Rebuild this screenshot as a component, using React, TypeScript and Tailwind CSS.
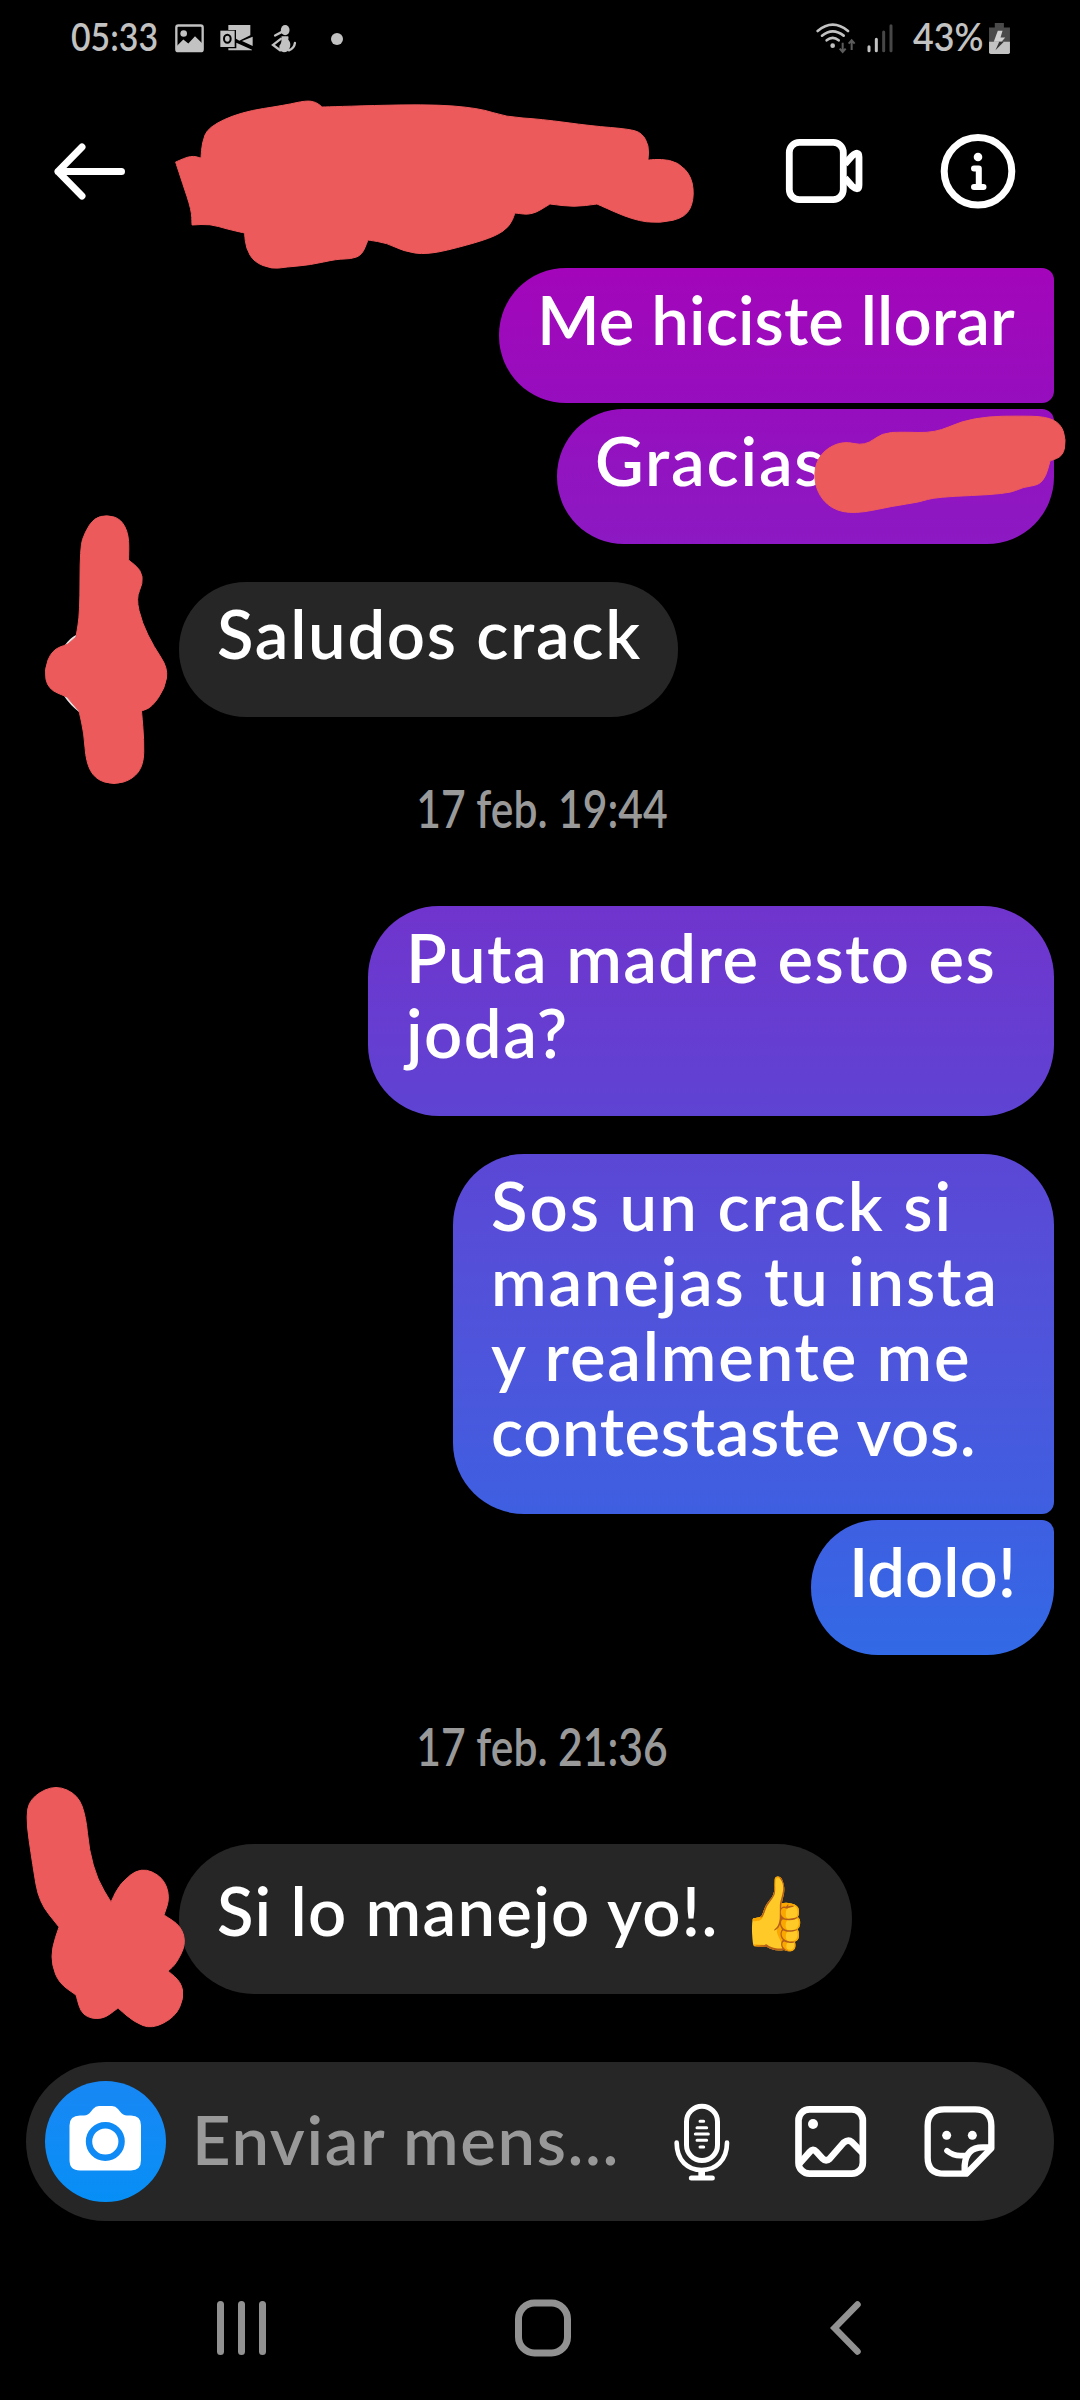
import { clsx } from "clsx";

interface Line {
  text: string;
  tracking: string;
}

interface BubbleProps {
  lines: Line[];
  className: string;
  emoji?: string;
}

type Point = [number, number];

// a point given twice makes a sharp corner
const SCRIBBLES: Point[][] = [
  [
    [175.6, 162], [175.6, 162], [191, 155.5], [201, 158], [201, 158], [202, 143], [208, 127], [241, 112],
    [286, 105], [306, 100.5], [316, 102], [322, 107], [322, 107], [427, 104], [479, 108], [506, 117],
    [540, 119], [592, 126], [629, 129], [642, 133], [649, 146], [648, 160], [648, 160], [661, 159],
    [678, 162], [692, 177], [694, 200], [686, 217], [660, 223.5], [633, 220], [597, 204], [597, 204],
    [574, 207], [550, 204], [550, 204], [532, 215], [515, 213], [515, 213], [510, 226], [496, 236],
    [468, 245], [427, 255], [403, 251], [387, 243], [368, 240], [368, 240], [362, 255], [351, 259],
    [337, 259], [310, 265], [286, 267], [272, 269], [254, 262], [246, 248], [244.5, 233], [244.5, 233],
    [227, 229], [210, 224], [192, 225], [192, 225], [191.5, 210], [182.5, 183],
  ],
  [
    [814, 467], [824, 450], [843, 441], [865, 446], [882, 433], [901, 432], [935, 433], [962, 421],
    [989, 416.5], [1016, 416], [1046, 416.5], [1061, 424], [1066, 440], [1063, 456], [1050, 461],
    [1050, 461], [1046, 476], [1039, 485], [1023, 487], [1008, 494], [935, 497], [920, 502], [893, 506],
    [855, 514], [831, 509], [816, 491],
  ],
  [
    [85, 532], [94, 518], [107, 515], [121, 519], [129, 535], [128.6, 560], [128.6, 560], [141, 570],
    [143, 583], [136, 598], [142, 623], [154, 647], [168, 668], [165, 688], [152, 707], [141.5, 711],
    [141.5, 711], [144, 740], [143.5, 765], [133, 779], [114, 785], [95, 779], [86, 762], [84, 733],
    [79, 711], [79, 711], [67, 697], [67, 697], [48, 689], [44, 670], [52, 650], [68, 644], [68, 644],
    [76, 637], [76, 637], [80, 613], [80, 547],
  ],
  [
    [25, 1812], [34, 1795], [56, 1785], [78, 1795], [86, 1817], [89, 1850], [97.6, 1880], [111, 1902],
    [111, 1902], [120, 1883], [141, 1867], [163, 1877], [170, 1897], [164, 1915], [164, 1915], [181, 1926],
    [186, 1944], [176, 1964], [168, 1971], [168, 1971], [181, 1982], [184, 1998], [175, 2017], [152, 2029],
    [134, 2022], [118, 2008], [118, 2008], [102, 2020], [82, 2016], [76, 1995], [76, 1995], [59, 1983],
    [52, 1965], [52, 1948], [59, 1927], [59, 1927], [39, 1902], [33, 1867],
  ],
];

// closed curve that passes through the middle of every edge
function smoothPath(points: Point[]) {
  const mid = (a: Point, b: Point) => `${(a[0] + b[0]) / 2} ${(a[1] + b[1]) / 2}`;
  const last = points[points.length - 1];
  const curves = points.map((p, i) => `Q${p[0]} ${p[1]} ${mid(p, points[(i + 1) % points.length])}`);
  return `M${mid(last, points[0])} ${curves.join(" ")}Z`;
}

function Scribbles() {
  return (
    <svg className="pointer-events-none absolute inset-0" width="1080" height="2400" viewBox="0 0 1080 2400">
      <path d="M76 635Q70 638 65 645L76 648ZM64 696Q70 705 79 712L84 700Z" fill="#e2e2e2" />
      {SCRIBBLES.map((points, i) => (
        <path key={i} d={smoothPath(points)} fill="#ed5a5b" stroke="#ed5a5b" strokeWidth="1" strokeLinejoin="round" />
      ))}
    </svg>
  );
}

function StatusBar() {
  return (
    <div className="flex h-[73px] items-center pr-[70px] pl-[71px] text-[38px] font-semibold text-[#c2c2c2]">
      <span className="w-[104px] shrink-0">
        <span className="inline-block origin-left scale-x-[0.89]">05:33</span>
      </span>
      <svg className="mt-[3px]" width="29" height="29" viewBox="45 26 87 86">
        <rect x="49" y="30" width="79" height="77" rx="6" fill="none" stroke="#c2c2c2" strokeWidth="7" />
        <circle cx="71" cy="54" r="10" fill="#c2c2c2" />
        <path d="M49 93L70 72L85 84L105 62L128 85V107H49Z" fill="#c2c2c2" />
      </svg>
      <svg className="mt-[3px] ml-4" width="33" height="28" viewBox="180 26 99 84">
        <path d="M205 29H271V60L238 76L228 70V44H205Z" fill="#c2c2c2" />
        <path d="M181 46H224V95H181Z" fill="#c2c2c2" />
        <ellipse cx="202" cy="70" rx="10" ry="12" fill="none" stroke="#000" strokeWidth="6" />
        <path d="M278 64V92L246 77ZM205 99H229V82L276 103V105H205Z" fill="#c2c2c2" />
      </svg>
      <svg className="mt-[3px] ml-[18px]" width="26" height="29" viewBox="333 26 77 86">
        <ellipse cx="375" cy="44" rx="13" ry="15" fill="#c2c2c2" />
        <path d="M386 104Q402 98 404 82" fill="none" stroke="#c2c2c2" strokeWidth="7" strokeLinecap="round" />
        <path d="M364 62H384Q386 66 384 72Q394 84 388 98Q384 110 371 110Q355 108 358 90Q366 82 364 62Z" fill="#c2c2c2" />
        <path d="M362 70L339 88L360 104M345 60L364 50" fill="none" stroke="#c2c2c2" strokeWidth="7" strokeLinecap="round" />
      </svg>
      <span className="mt-1 ml-[34px] size-3 rounded-full bg-[#c2c2c2]" />
      <svg className="mt-[3px] ml-auto" width="40" height="32" viewBox="50 22 120 96">
        <g fill="none" stroke="#c2c2c2" strokeWidth="8" strokeLinecap="round">
          <path d="M55 49Q100 11 146 49" />
          <path d="M68 63Q100 37 133 63" />
          <path d="M82 77Q100 62 118 77" />
        </g>
        <circle cx="100" cy="93" r="7" fill="#c2c2c2" />
        <path d="M130 84V111M121 102L130 112L139 102M157 106V78M148 87L157 77L166 87" fill="none" stroke="#5c5c5c" strokeWidth="6" />
      </svg>
      <svg className="mt-[3px] ml-[11px]" width="26" height="30" viewBox="201 28 78 90">
        <g fill="none" strokeWidth="9" strokeLinecap="round">
          <path d="M207 99V111M229 77V111" stroke="#c2c2c2" />
          <path d="M251 55V111M273 36V111" stroke="#474747" />
        </g>
      </svg>
      <span className="ml-5 w-[76px]">
        <span className="inline-block origin-left scale-x-[0.94]">43%</span>
      </span>
      <svg className="mt-[3px]" width="21" height="31" viewBox="569 25 62 92">
        <path d="M586 25H613V38H631V82H569V38H586Z" fill="#4a4a4a" />
        <path d="M569 81H631V112Q631 117 626 117H574Q569 117 569 112Z" fill="#c2c2c2" />
        <path d="M595 48H609L603 68H617L606 81H583Z" fill="#d0d0d0" />
        <path d="M599 81H613L588 106L596 88Z" fill="#333" />
      </svg>
    </div>
  );
}

function Header() {
  return (
    <header className="flex h-[195px] items-center pt-[1px] pr-16 pl-[52px]">
      <svg width="76" height="60" viewBox="0 0 76 60" fill="none" stroke="#fff" strokeWidth="7" strokeLinecap="round" strokeLinejoin="round">
        <path d="M69.500 30.500H6M30 6L6 30.500L30 55" />
      </svg>
      <svg className="ml-auto" width="78" height="70" viewBox="785 137 78 70" fill="none" stroke="#fff" strokeWidth="6.800">
        <rect x="789.300" y="143.400" width="54" height="57.200" rx="10" />
        <path d="M845 165L852 157Q859 151 859 158V186Q859 193 852 187L845 179" strokeLinejoin="round" />
      </svg>
      <svg className="ml-[77px]" width="76" height="76" viewBox="939 134 76 76" fill="none" stroke="#fff">
        <circle cx="977" cy="172.300" r="33.800" strokeWidth="7" />
        <circle cx="977" cy="158" r="4.300" fill="#fff" stroke="none" />
        <path d="M973 169.500H977.800V188M973 188H982.500" strokeWidth="6" strokeLinecap="round" strokeLinejoin="round" />
      </svg>
    </header>
  );
}

function Bubble({ lines, className, emoji }: BubbleProps) {
  return (
    <div className={clsx("shrink-0 pl-[38px] text-[67px] leading-[75px] font-semibold whitespace-nowrap", className)}>
      {lines.map((line) => (
        <p key={line.text} className={line.tracking}>
          {line.text}
        </p>
      ))}
      {emoji && <span className="ml-6 inline-block origin-left scale-x-[0.72] text-[72px]">{emoji}</span>}
    </div>
  );
}

function Timestamp({ children }: { children: string }) {
  return (
    <div className="flex h-[189px] shrink-0 items-center justify-center pb-[4px] pl-[3px] text-[51px] font-semibold text-[#999]">
      <span className="w-[310px] origin-center scale-x-[0.835] text-center whitespace-nowrap">{children}</span>
    </div>
  );
}

function Composer() {
  return (
    <div className="mx-[26px] mt-[68px] flex h-[159px] shrink-0 items-center rounded-full bg-[#262626] pl-[19px]">
      <div className="size-[121px] shrink-0 rounded-full bg-linear-to-b from-[#1787f4] to-[#068ff6]">
        <svg width="121" height="121" viewBox="0 0 121 121">
          <path
            d="M35 34.500H39Q43 34.500 46 30.500L48 28Q50.500 25 54 25H67Q70.500 25 73 28L75 30.500Q78 34.500 82 34.500H86Q96 34.500 96 44.500V79Q96 89.500 86 89.500H35Q24.500 89.500 24.500 79V44.500Q24.500 34.500 35 34.500Z"
            fill="#fff"
          />
          <circle cx="60.300" cy="60.500" r="16.300" fill="none" stroke="#108bf5" strokeWidth="6.400" />
        </svg>
      </div>
      <span className="ml-[26px] pb-[5px] text-[67px] leading-[75px] font-semibold tracking-[1.6px] whitespace-nowrap text-[#999]">
        Enviar mens...
      </span>
      <div className="mr-[58px] ml-auto flex shrink-0 items-center">
        <svg width="58" height="80" viewBox="155 184 174 240" fill="none" stroke="#fff" strokeLinecap="round">
          <rect x="195.500" y="196.500" width="93" height="163" rx="46.500" strokeWidth="15" />
          <path d="M166 306C166 360 200 388 241 388C282 388 317 360 317 306" strokeWidth="14" />
          <path d="M241 390V408" strokeWidth="20" strokeLinecap="butt" />
          <path d="M210 412H273" strokeWidth="15" />
          <path d="M236 242H247M227 261H256M222 280H261M227 299H256M236 319H247" strokeWidth="9" />
        </svg>
        <svg className="ml-[63px]" width="73" height="73" viewBox="519 195 219 219" fill="none" stroke="#fff" strokeWidth="20">
          <rect x="532.500" y="208" width="193" height="193" rx="33" />
          <circle cx="576" cy="252" r="15" fill="#fff" stroke="none" />
          <path d="M536 370L566 336Q576 324 586 335L605 356Q615 366 626 356L668 308Q682 297 692 306L726 340" />
        </svg>
        <svg className="ml-[56px]" width="73" height="73" viewBox="906 195 219 219" fill="none" stroke="#fff" strokeWidth="19" strokeLinejoin="round">
          <path d="M1036 401H970Q920 401 920 353V257Q920 208 970 208H1062Q1111 208 1111 257V325Z" />
          <path d="M1031 400V376Q1035 322 1085 322H1110" />
          <path d="M978 332Q998 348 1020 347H1036" strokeWidth="17" strokeLinecap="round" />
          <circle cx="977" cy="286" r="13.500" fill="#fff" stroke="none" />
          <circle cx="1054" cy="286" r="13.500" fill="#fff" stroke="none" />
        </svg>
      </div>
    </div>
  );
}

function NavBar() {
  return (
    <nav className="flex h-[179px] items-center pt-[34px] pl-[217px]">
      <svg width="50" height="54" viewBox="0 0 50 54" fill="none" stroke="#919191" strokeWidth="7" strokeLinecap="round">
        <path d="M3.500 3.500V50.500M24.500 3.500V50.500M45.500 3.500V50.500" />
      </svg>
      <svg className="ml-[247px]" width="58" height="58" viewBox="0 0 58 58" fill="none" stroke="#919191" strokeWidth="7">
        <rect x="4.500" y="4" width="49" height="50" rx="16" />
      </svg>
      <svg className="ml-[258px]" width="32" height="56" viewBox="0 0 32 56" fill="none" stroke="#919191" strokeWidth="6.500" strokeLinecap="round">
        <path d="M27.500 4.500L4.500 28L27.500 51.500" />
      </svg>
    </nav>
  );
}

export default function App() {
  return (
    <div className="relative flex h-[2400px] w-[1080px] flex-col overflow-hidden bg-black font-['Lato',sans-serif] text-white">
      <StatusBar />
      <Header />

      <main className="flex flex-col pr-[26px] pl-[179px]">
        <Bubble
          lines={[{ text: "Me hiciste llorar", tracking: "tracking-[0.1px]" }]}
          className="h-[135px] w-[555px] self-end rounded-l-[67px] rounded-r-[12px] bg-linear-to-b from-[#a305ba] to-[#960ebe] pt-[14px]"
        />
        <Bubble
          lines={[{ text: "Gracias", tracking: "tracking-[1.8px]" }]}
          className="mt-1.5 h-[135px] w-[497px] self-end rounded-[67px] rounded-tr-[12px] bg-linear-to-b from-[#960ebe] to-[#8c19c3] pt-[14px]"
        />
        <Bubble
          lines={[{ text: "Saludos crack", tracking: "tracking-[1.7px]" }]}
          className="mt-[38px] h-[135px] w-[499px] self-start rounded-[67px] bg-[#262626] pt-[14px]"
        />
      </main>

      <Timestamp>17 feb. 19:44</Timestamp>

      <section className="flex flex-col pr-[26px]">
        <Bubble
          lines={[
            { text: "Puta madre esto es", tracking: "tracking-[1.4px]" },
            { text: "joda?", tracking: "tracking-[1.5px]" },
          ]}
          className="h-[210px] w-[686px] self-end rounded-[71px] bg-linear-to-b from-[#7034cd] to-[#5e43d3] pt-[14px]"
        />
        <Bubble
          lines={[
            { text: "Sos un crack si", tracking: "tracking-[2px]" },
            { text: "manejas tu insta", tracking: "tracking-[1.8px]" },
            { text: "y realmente me", tracking: "tracking-[1.8px]" },
            { text: "contestaste vos.", tracking: "tracking-[0.6px]" },
          ]}
          className="mt-[38px] h-[360px] w-[601px] self-end rounded-[71px] rounded-br-[12px] bg-linear-to-b from-[#5b47d5] to-[#3e5fe1] pt-[14px]"
        />
        <Bubble
          lines={[{ text: "Idolo!", tracking: "tracking-normal" }]}
          className="mt-1.5 h-[135px] w-[243px] self-end rounded-[67px] rounded-tr-[12px] bg-linear-to-b from-[#3e5fe1] to-[#3269e5] pt-[14px]"
        />
      </section>

      <Timestamp>17 feb. 21:36</Timestamp>

      <section className="flex flex-col pl-[179px]">
        <Bubble
          lines={[{ text: "Si lo manejo yo!.", tracking: "tracking-[1.3px]" }]}
          emoji="👍"
          className="flex h-[150px] w-[673px] rounded-[75px] bg-[#262626] pt-[29px]"
        />
      </section>

      <Composer />
      <NavBar />
      <Scribbles />
    </div>
  );
}
